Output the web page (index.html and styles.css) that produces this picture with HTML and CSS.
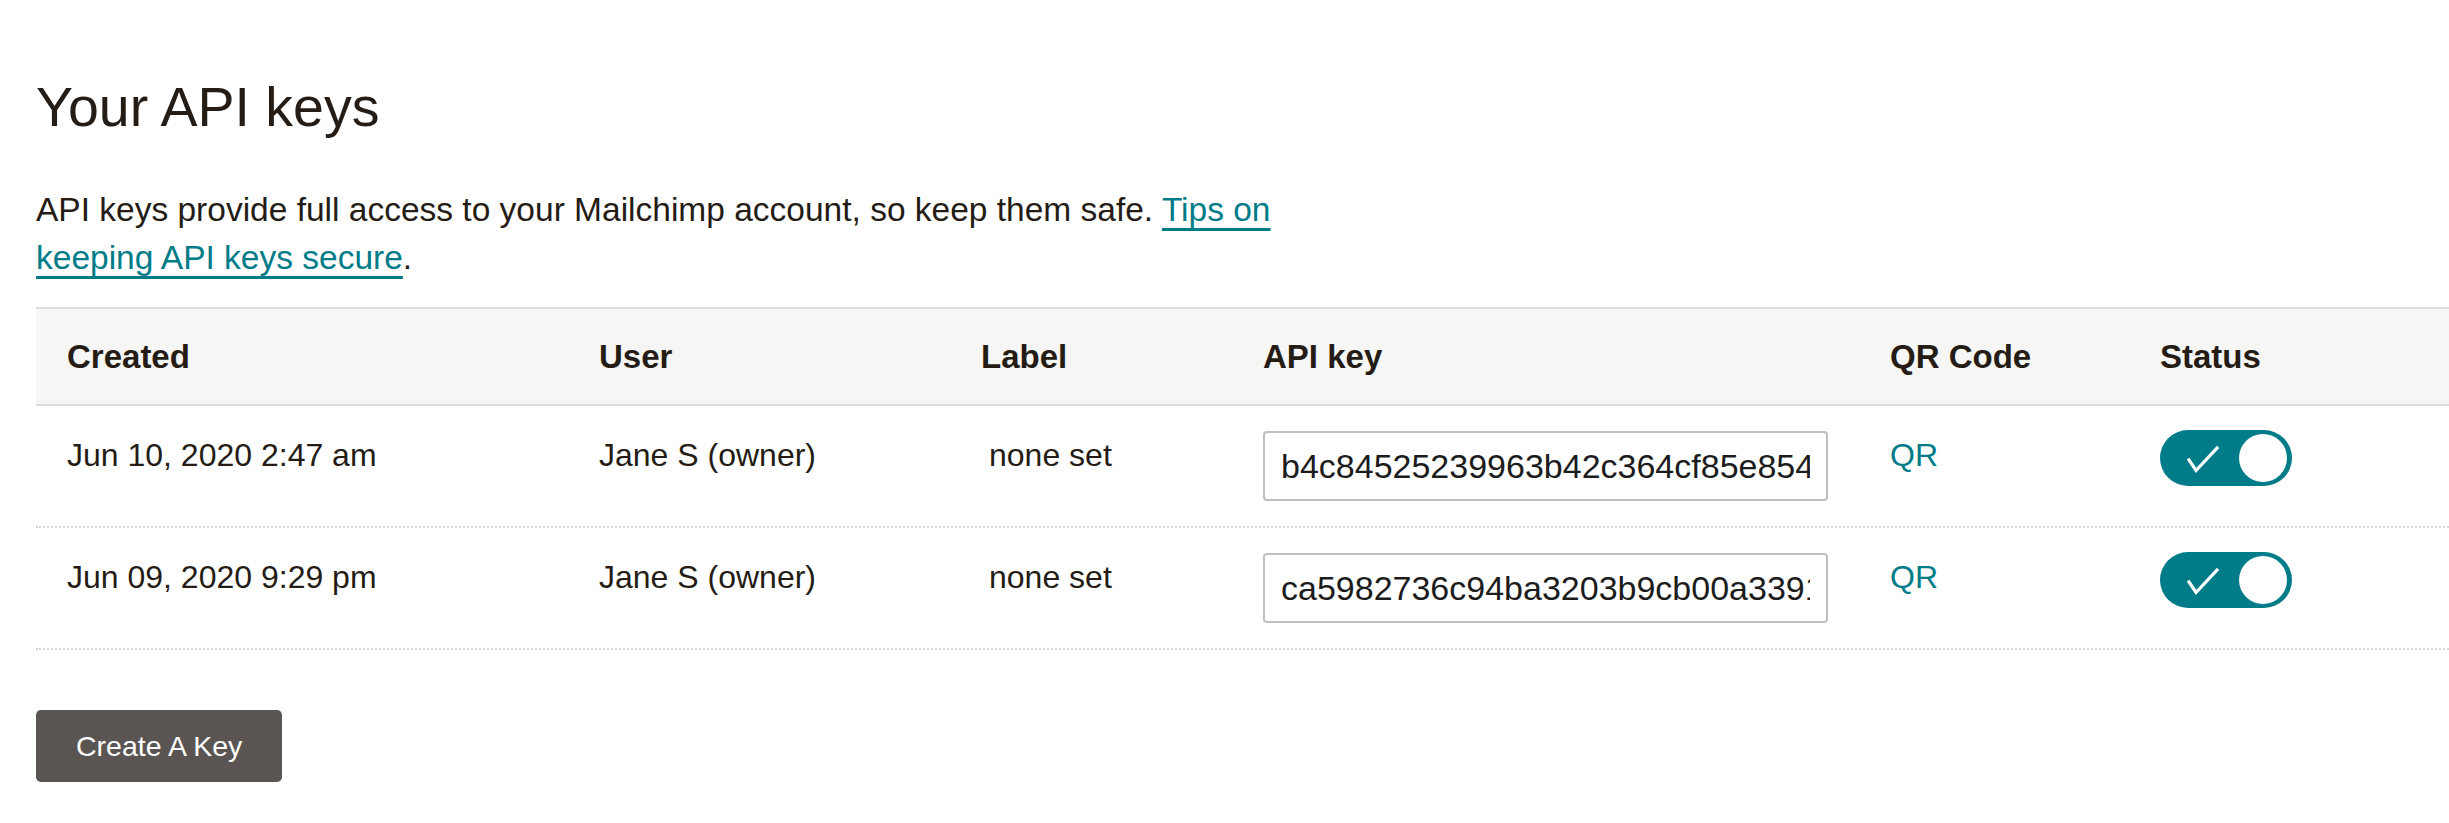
FILE: index.html
```html
<!DOCTYPE html>
<html lang="en">
<head>
<meta charset="utf-8">
<title>Your API keys</title>
<link rel="stylesheet" href="styles.css">
</head>
<body>
<main class="page">
  <h1 class="title">Your API keys</h1>
  <p class="intro">API keys provide full access to your Mailchimp account, so keep them safe. <a class="link" href="#">Tips on</a> <a class="link" href="#">keeping API keys secure</a>.</p>

  <div class="keys">
    <div class="row head">
      <div class="cell">Created</div>
      <div class="cell">User</div>
      <div class="cell">Label</div>
      <div class="cell">API key</div>
      <div class="cell">QR Code</div>
      <div class="cell">Status</div>
    </div>
    <div class="row">
      <div class="cell">Jun 10, 2020 2:47 am</div>
      <div class="cell">Jane S (owner)</div>
      <div class="cell"><span class="label">none set</span></div>
      <div class="cell"><input class="key" type="text" readonly value="b4c84525239963b42c364cf85e854a17-us10"></div>
      <div class="cell"><a class="qr" href="#">QR</a></div>
      <div class="cell">
        <span class="toggle">
          <svg class="check" width="132" height="56" viewBox="0 0 132 56"><path d="M29 30 L36 40.5 L57 18" fill="none" stroke="#fff" stroke-width="3.2" stroke-linecap="square" stroke-linejoin="miter"/></svg>
          <span class="knob"></span>
        </span>
      </div>
    </div>
    <div class="row">
      <div class="cell">Jun 09, 2020 9:29 pm</div>
      <div class="cell">Jane S (owner)</div>
      <div class="cell"><span class="label">none set</span></div>
      <div class="cell"><input class="key" type="text" readonly value="ca5982736c94ba3203b9cb00a3391c52-us10"></div>
      <div class="cell"><a class="qr" href="#">QR</a></div>
      <div class="cell">
        <span class="toggle">
          <svg class="check" width="132" height="56" viewBox="0 0 132 56"><path d="M29 30 L36 40.5 L57 18" fill="none" stroke="#fff" stroke-width="3.2" stroke-linecap="square" stroke-linejoin="miter"/></svg>
          <span class="knob"></span>
        </span>
      </div>
    </div>
  </div>

  <button class="create" type="button">Create A Key</button>
</main>
</body>
</html>
```

FILE: styles.css
```css
* { box-sizing: border-box; }

html, body {
  margin: 0;
  padding: 0;
  background: #ffffff;
}

body {
  font-family: "Liberation Sans", Arial, sans-serif;
  color: #241c15;
  overflow: hidden;
}

.page {
  padding: 75px 0 0 36px;
}

.title {
  margin: 0 0 46px;
  font-size: 55.5px;
  line-height: 65px;
  font-weight: 400;
  color: #241c15;
}

.intro {
  margin: 0 0 25px;
  max-width: 1300px;
  font-size: 33.5px;
  line-height: 48px;
}

.link {
  color: #007c89;
  text-decoration: underline;
  text-decoration-thickness: 3px;
  text-underline-offset: 7px;
}

.keys {
  width: 100%;
}

.row {
  display: grid;
  grid-template-columns: 532px 382px 282px 627px 270px 1fr;
  height: 122px;
  border-bottom: 2px dotted #d6d6d6;
  font-size: 32px;
  line-height: 50px;
}

.row .cell {
  padding: 24px 0 0 31px;
}

.row.head {
  height: 99px;
  background: #f6f6f4;
  border-top: 2px solid #dddddb;
  border-bottom: 2px solid #dddddb;
  font-size: 33px;
  font-weight: 700;
  align-items: center;
}

.row.head .cell {
  padding-top: 0;
}

.label {
  padding-left: 8px;
}

.key {
  display: block;
  width: 565px;
  height: 70px;
  margin-top: 1px;
  padding: 0 16px;
  border: 2px solid #bfbfbf;
  border-radius: 4px;
  background: #fff;
  font-family: "Liberation Sans", Arial, sans-serif;
  font-size: 34px;
  color: #1c1c1c;
  outline: none;
}

.qr {
  color: #007c89;
  text-decoration: none;
}

.toggle {
  position: relative;
  display: block;
  width: 132px;
  height: 56px;
  border-radius: 28px;
  background: #007c89;
}

.check {
  position: absolute;
  left: 0;
  top: 0;
}

.knob {
  position: absolute;
  top: 4px;
  right: 5px;
  width: 48px;
  height: 48px;
  border-radius: 50%;
  background: #ffffff;
}

.create {
  display: inline-flex;
  align-items: center;
  height: 72px;
  margin-top: 60px;
  padding: 0 40px;
  border: none;
  border-radius: 5px;
  background: #5a5552;
  color: #ffffff;
  font-family: "Liberation Sans", Arial, sans-serif;
  font-size: 28.5px;
  cursor: pointer;
}
```
